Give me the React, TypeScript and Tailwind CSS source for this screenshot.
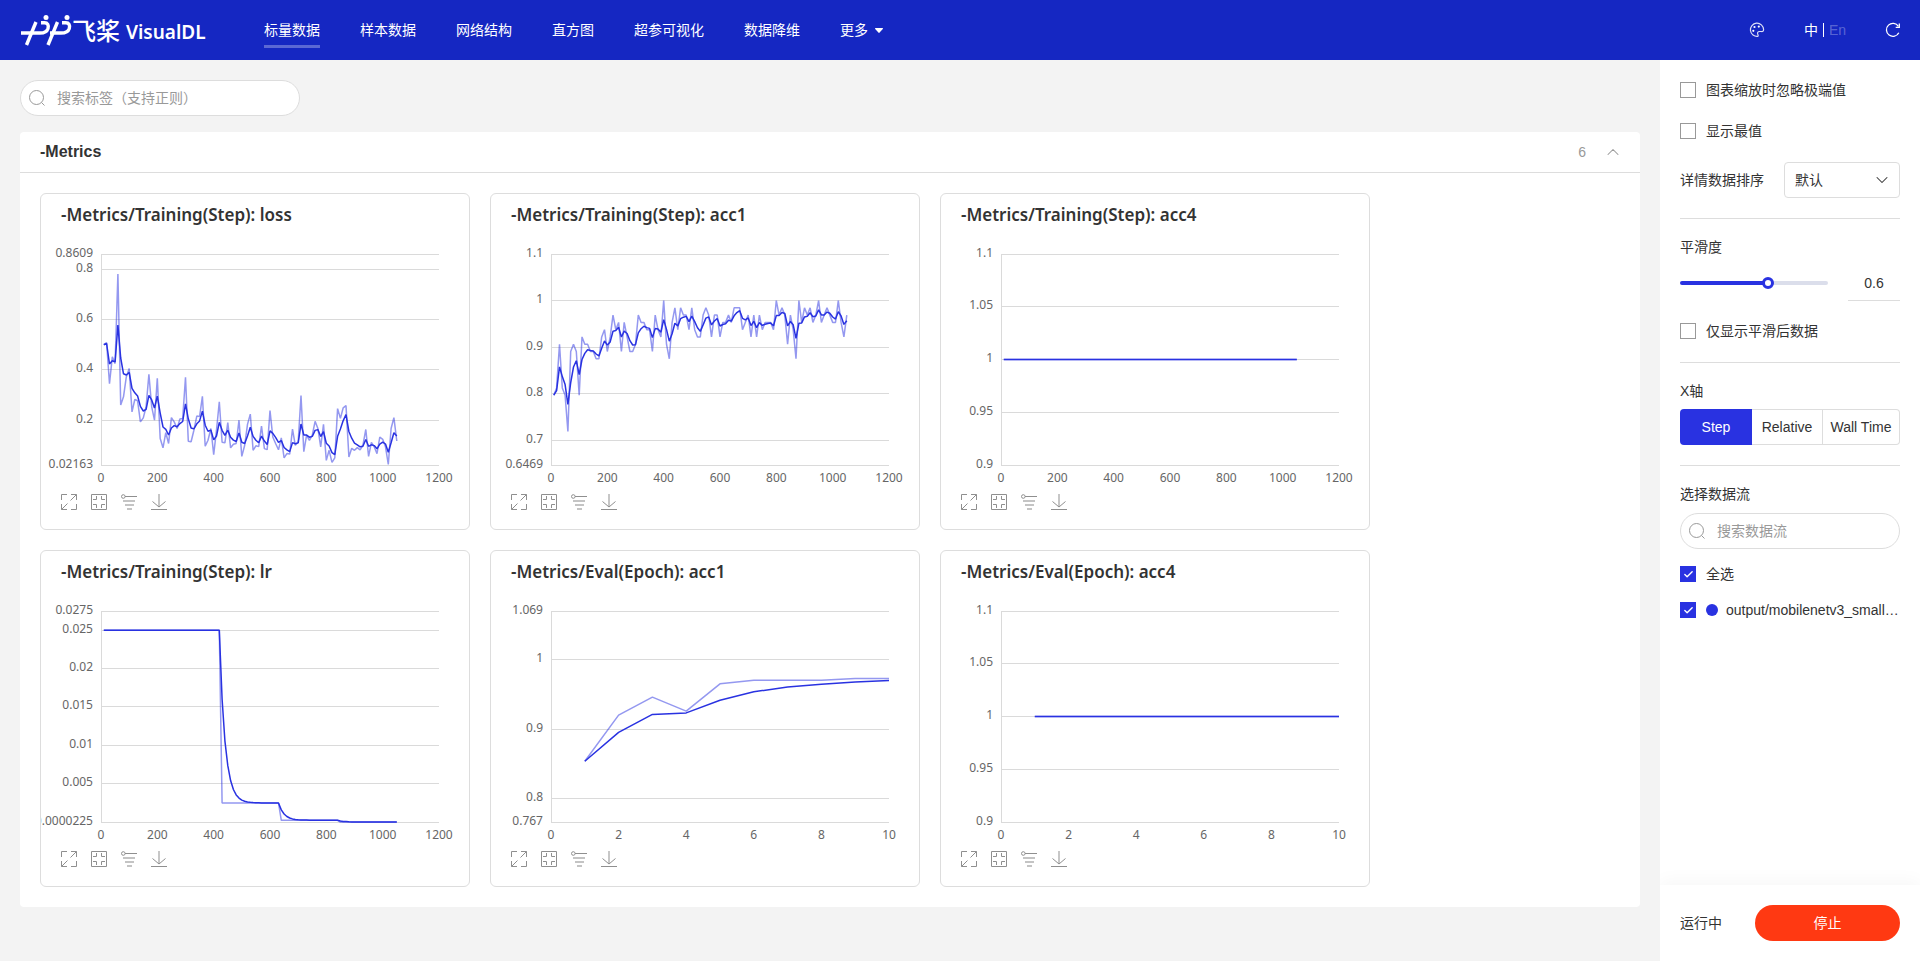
import { useState } from 'react';
import type { ReactNode } from 'react';
import { Check, ChevronDown, ChevronUp } from 'lucide-react';

type Point = [number, number];

interface ChartData {
  title: string;
  points: Point[];
  yTicks: number[];
  xTicks: number[];
}

const NAV = ['标量数据', '样本数据', '网络结构', '直方图', '超参可视化', '数据降维'];

const LOSS = [
  0.5, 0.508, 0.345, 0.452, 0.425, 0.781, 0.26, 0.293, 0.372, 0.405, 0.233, 0.282, 0.277, 0.193, 0.209, 0.253, 0.382,
  0.253, 0.2, 0.366, 0.127, 0.09, 0.15, 0.107, 0.21, 0.193, 0.167, 0.205, 0.207, 0.371, 0.116, 0.114, 0.16, 0.216,
  0.214, 0.295, 0.096, 0.12, 0.167, 0.063, 0.16, 0.273, 0.112, 0.11, 0.19, 0.09, 0.104, 0.107, 0.2, 0.056, 0.1, 0.183,
  0.224, 0.08, 0.098, 0.095, 0.176, 0.087, 0.083, 0.238, 0.133, 0.107, 0.082, 0.13, 0.05, 0.067, 0.065, 0.164, 0.1,
  0.114, 0.298, 0.075, 0.14, 0.12, 0.14, 0.195, 0.167, 0.094, 0.183, 0.04, 0.08, 0.032, 0.05, 0.246, 0.207, 0.249,
  0.258, 0.054, 0.088, 0.08, 0.091, 0.082, 0.1, 0.163, 0.056, 0.111, 0.094, 0.067, 0.133, 0.124, 0.094, 0.0235, 0.167,
  0.21, 0.117,
];

// correct predictions out of a batch of 64
const ACC1 = [
  51, 52, 58, 52, 51, 46, 57, 58, 57, 51, 59, 58, 58, 57, 57, 56, 56, 59, 60, 57, 59, 62, 60, 61, 57, 61, 59, 57, 57,
  58, 62, 61, 61, 60, 60, 57, 62, 60, 59, 64, 58, 56, 61, 63, 60, 63, 62, 62, 60, 63, 60, 59, 59, 62, 63, 62, 59, 62,
  62, 59, 61, 61, 62, 61, 63, 63, 63, 60, 61, 62, 59, 62, 59, 62, 60, 61, 61, 61, 60, 64, 62, 63, 62, 58, 62, 60, 56,
  64, 61, 63, 62, 63, 61, 62, 64, 61, 62, 63, 62, 61, 61, 64, 61, 59, 62,
];

const EVAL_ACC1 = [0.854, 0.92, 0.9457, 0.9257, 0.9648, 0.97, 0.97, 0.97, 0.9724, 0.9724];

const LR = Array.from({ length: 105 }, (_, i) => {
  if (i < 42) return 0.025;
  if (i < 63) return 0.0025;
  if (i < 84) return 0.00025;
  return 0.0000225;
});

const series = (values: number[], step: number): Point[] => values.map((v, i) => [(i + 1) * step, v]);

const STEP_TICKS = [0, 200, 400, 600, 800, 1000, 1200];
const EPOCH_TICKS = [0, 2, 4, 6, 8, 10];

const CHARTS: ChartData[] = [
  {
    title: '-Metrics/Training(Step): loss',
    points: series(LOSS, 10),
    yTicks: [0.02163, 0.2, 0.4, 0.6, 0.8, 0.8609],
    xTicks: STEP_TICKS,
  },
  {
    title: '-Metrics/Training(Step): acc1',
    points: series(ACC1.map((n) => n / 64), 10),
    yTicks: [0.6469, 0.7, 0.8, 0.9, 1, 1.1],
    xTicks: STEP_TICKS,
  },
  {
    title: '-Metrics/Training(Step): acc4',
    points: series(Array(105).fill(1), 10),
    yTicks: [0.9, 0.95, 1, 1.05, 1.1],
    xTicks: STEP_TICKS,
  },
  {
    title: '-Metrics/Training(Step): lr',
    points: series(LR, 10),
    yTicks: [0.0000225, 0.005, 0.01, 0.015, 0.02, 0.025, 0.0275],
    xTicks: STEP_TICKS,
  },
  {
    title: '-Metrics/Eval(Epoch): acc1',
    points: series(EVAL_ACC1, 1),
    yTicks: [0.767, 0.8, 0.9, 1, 1.069],
    xTicks: EPOCH_TICKS,
  },
  {
    title: '-Metrics/Eval(Epoch): acc4',
    points: series(Array(10).fill(1), 1),
    yTicks: [0.9, 0.95, 1, 1.05, 1.1],
    xTicks: EPOCH_TICKS,
  },
];

const formatTick = (v: number) => (v !== 0 && v < 0.001 ? v.toFixed(7) : String(v));

// exponential moving average with debiasing
function smooth(points: Point[], weight: number): Point[] {
  let last = 0;
  return points.map(([x, y], i) => {
    last = last * weight + (1 - weight) * y;
    return [x, last / (1 - Math.pow(weight, i + 1))];
  });
}

function Logo() {
  return (
    <svg width="52" height="32" viewBox="20 14 52 32" fill="none" stroke="#fff" strokeWidth="3.4" className="shrink-0">
      <path d="M21 33h19c4.500 0 7-1.400 8-4.600.9-3.300-.4-5.700-3.500-5.700H41" />
      <path d="M36 22 26.500 45" />
      <path d="M50 33h11c4.500 0 7.300-1.400 8.300-4.600.9-3.300-.4-5.700-3.500-5.700H62" />
      <path d="M57.500 22 48 45" />
      <circle cx="46" cy="17.500" r="2.500" fill="#fff" stroke="none" />
      <circle cx="67" cy="17.500" r="2.500" fill="#fff" stroke="none" />
    </svg>
  );
}

function PaletteIcon() {
  return (
    <svg width="16" height="16" viewBox="0 0 16 16" fill="none" stroke="#fff" strokeOpacity="0.85" strokeWidth="1.200">
      <path d="M9 14.300A6.600 6.600 0 1 1 14.600 7.500c0 1.600-1 2.200-2.300 2H10.400c-1.500 0-2.200 1.300-1.700 2.500.4.900.9 1.900.3 2.300Z" />
      <g fill="#fff" stroke="none">
        <circle cx="5.500" cy="5" r="1.100" />
        <circle cx="9.800" cy="4.600" r="1.100" />
        <circle cx="4.300" cy="8.800" r="1.100" />
      </g>
    </svg>
  );
}

function RefreshIcon() {
  return (
    <svg width="16" height="16" viewBox="0 0 16 16" fill="none" stroke="#fff" strokeWidth="1.300">
      <path d="M13.800 10.700A6.500 6.500 0 1 1 13.400 4.300" />
      <path d="M14.300 1.500v3.800h-3.600" />
    </svg>
  );
}

function SearchIcon() {
  return (
    <svg width="16" height="16" viewBox="0 0 16 16" fill="none" stroke="#999" className="shrink-0">
      <circle cx="7.500" cy="7.500" r="7" />
      <path d="m12.500 12.500 3 3" />
    </svg>
  );
}

function ToolButton({ label, children }: { label: string; children: ReactNode }) {
  return (
    <button type="button" aria-label={label} className="size-4 cursor-pointer text-[#8f8f8f]">
      <svg width="16" height="16" viewBox="0 0 16 16" fill="none" stroke="currentColor">
        {children}
      </svg>
    </button>
  );
}

function Toolbox() {
  return (
    <div className="mt-[9px] flex gap-[14px] px-5">
      <ToolButton label="最大化">
        <path d="M.5 6V.5H6M10 .5h5.500V6M9.500 6.500l6-6M.5 10v5.500H6M.5 15.500l6-6M10 15.500h5.500V10" />
      </ToolButton>
      <ToolButton label="还原缩放">
        <path d="M.5.5h15v15H.5zM5.500 2v3.500H2M10.500 2v3.500H14M2 10.500h3.500V14M14 10.500h-3.500V14" />
      </ToolButton>
      <ToolButton label="切换坐标轴">
        <circle cx="2.300" cy="2.500" r="1.800" />
        <path d="M4 2.500h12" />
        <path d="M2 7h12M4 11h9M6 15h5" strokeWidth="1.500" strokeOpacity="0.700" />
      </ToolButton>
      <ToolButton label="下载图片">
        <path d="M8 0v13M1.500 7.500 8 13l6.500-5.500M0 15.500h16" />
      </ToolButton>
    </div>
  );
}

const LEFT = 60;
const TOP = 14;
const WIDTH = 338;
const HEIGHT = 211;

function LineChart({ points, yTicks, xTicks, weight, smoothedOnly }: Omit<ChartData, 'title'> & { weight: number; smoothedOnly: boolean }) {
  const yMin = yTicks[0];
  const yMax = yTicks[yTicks.length - 1];
  const xMax = xTicks[xTicks.length - 1];
  const px = (x: number) => LEFT + (x / xMax) * WIDTH;
  const py = (y: number) => TOP + (1 - (y - yMin) / (yMax - yMin)) * HEIGHT;
  const toPath = (data: Point[]) => data.map(([x, y]) => `${px(x).toFixed(1)},${py(y).toFixed(1)}`).join(' ');

  return (
    <svg width="428" height="245" className="block font-['Noto_Sans'] text-xs" fill="#666">
      {yTicks.map((tick) => {
        const y = Math.floor(py(tick)) + 0.5;
        return (
          <g key={tick}>
            <line x1={LEFT} x2={LEFT + WIDTH} y1={y} y2={y} stroke="#dadada" />
            <text x={LEFT - 8} y={y + 2.5} textAnchor="end">{formatTick(tick)}</text>
          </g>
        );
      })}
      <line x1={LEFT + 0.5} x2={LEFT + 0.5} y1={TOP} y2={TOP + HEIGHT} stroke="#dadada" />
      {xTicks.map((tick) => (
        <text key={tick} x={px(tick)} y={TOP + HEIGHT + 17} textAnchor="middle">{tick}</text>
      ))}
      <g fill="none" stroke="#2932e1" strokeWidth="1.5" strokeLinejoin="bevel">
        {!smoothedOnly && <polyline points={toPath(points)} strokeOpacity="0.5" />}
        <polyline points={toPath(smooth(points, weight))} />
      </g>
    </svg>
  );
}

function Checkbox({ label, checked, onChange, dot }: { label: string; checked: boolean; onChange: (v: boolean) => void; dot?: boolean }) {
  return (
    <label className="flex h-5 cursor-pointer items-center">
      <span className="relative size-4 shrink-0">
        <input
          type="checkbox"
          checked={checked}
          onChange={(e) => onChange(e.target.checked)}
          className="block size-4 appearance-none border border-[#999] bg-white checked:border-[#2932e1] checked:bg-[#2932e1]"
        />
        {checked && <Check className="pointer-events-none absolute top-[3px] left-[3px] size-[11px] text-white" strokeWidth={3} />}
      </span>
      {dot && <span className="ml-[10px] size-3 shrink-0 rounded-full bg-[#2932e1]" />}
      <span className={dot ? 'ml-2 truncate' : 'ml-[10px]'}>{label}</span>
    </label>
  );
}

function SearchInput({ placeholder }: { placeholder: string }) {
  return (
    <div className="flex h-9 items-center rounded-full border border-[#ddd] bg-white pr-4 pl-2">
      <SearchIcon />
      <input
        type="text"
        aria-label={placeholder}
        placeholder={placeholder}
        className="ml-3 min-w-0 flex-1 bg-transparent outline-none placeholder:text-[#999]"
      />
    </div>
  );
}

function Navbar() {
  return (
    <header className="flex h-[60px] shrink-0 items-center bg-[#1527c2] pr-[19px] pl-5 text-white">
      <a href="#" className="flex w-[224px] items-center">
        <Logo />
        <span className="font-['Noto_Sans_CJK_SC'] text-2xl leading-8 font-medium">飞桨</span>
        <span className="ml-[6px] pt-1 font-['Noto_Sans'] text-[19px] leading-7 font-semibold">VisualDL</span>
      </a>
      <nav className="ml-5 flex gap-10">
        {NAV.map((item, i) => (
          <a
            key={item}
            href="#"
            className={i === 0 ? 'border-b-3 border-white/30 pt-[3px] leading-[30px]' : 'border-b-3 border-transparent pt-[3px] leading-[30px]'}
          >
            {item}
          </a>
        ))}
        <button type="button" className="flex cursor-pointer items-center border-b-3 border-transparent pt-[3px] leading-[30px]">
          更多
          <svg width="8" height="5" viewBox="0 0 8 5" fill="#fff" className="ml-[7px]">
            <path d="M.5 0h7c.5 0 .6.500.300.900L4.600 4.600a.8.8 0 0 1-1.200 0L.2.9C-.1.5 0 0 .5 0Z" />
          </svg>
        </button>
      </nav>
      <div className="ml-auto flex items-center">
        <button type="button" aria-label="主题" className="cursor-pointer">
          <PaletteIcon />
        </button>
        <button type="button" className="ml-[39px] flex cursor-pointer items-center">
          <span>中</span>
          <span className="mx-[5px] h-[14px] w-px bg-white" />
          <span className="text-white/30">En</span>
        </button>
        <button type="button" aria-label="刷新" className="ml-[39px] cursor-pointer">
          <RefreshIcon />
        </button>
      </div>
    </header>
  );
}

export default function App() {
  const [ignoreOutliers, setIgnoreOutliers] = useState(false);
  const [showExtremum, setShowExtremum] = useState(false);
  const [smoothing, setSmoothing] = useState(0.6);
  const [smoothedOnly, setSmoothedOnly] = useState(false);
  const [axis, setAxis] = useState('Step');
  const [selected, setSelected] = useState(true);
  const [running, setRunning] = useState(true);

  const filled = (smoothing / 0.99) * 100;
  const axisClass = (name: string) => (axis === name ? 'bg-[#2932e1] text-white' : 'border-y border-r border-[#ddd] bg-white');

  return (
    <div className="flex min-h-screen flex-col bg-[#f3f3f3] font-['Liberation_Sans','Noto_Sans_CJK_SC',sans-serif] text-sm text-[#333]">
      <Navbar />
      <div className="flex flex-1">
        <main className="min-w-0 flex-1 p-5">
          <div className="w-[280px]">
            <SearchInput placeholder="搜索标签（支持正则）" />
          </div>
          <section className="mt-4 rounded bg-white">
            <div className="flex h-[41px] items-center border-b border-[#ddd] pr-[17px] pl-5">
              <h2 className="text-base font-bold">-Metrics</h2>
              <span className="ml-auto text-[#999]">6</span>
              <button type="button" aria-label="收起" className="ml-[17px] cursor-pointer text-[#999]">
                <ChevronUp className="size-5" strokeWidth={1.25} />
              </button>
            </div>
            <div className="flex flex-wrap gap-5 p-5">
              {CHARTS.map(({ title, ...chart }) => (
                <article key={title} className="h-[337px] w-[430px] overflow-hidden rounded-md border border-[#ddd]">
                  <h3 className="px-5 pt-[9px] pb-[13px] font-['Noto_Sans'] text-[17px] leading-6 font-semibold">{title}</h3>
                  <LineChart {...chart} weight={smoothing} smoothedOnly={smoothedOnly} />
                  <Toolbox />
                </article>
              ))}
            </div>
          </section>
        </main>

        <aside className="flex w-[260px] shrink-0 flex-col overflow-hidden bg-white">
          <div className="flex-1 px-5 pt-5 leading-5">
            <Checkbox label="图表缩放时忽略极端值" checked={ignoreOutliers} onChange={setIgnoreOutliers} />
            <div className="mt-[21px]">
              <Checkbox label="显示最值" checked={showExtremum} onChange={setShowExtremum} />
            </div>
            <div className="mt-[21px] flex items-center justify-between">
              <label htmlFor="sort">详情数据排序</label>
              <div className="relative">
                <select id="sort" className="h-9 w-[116px] appearance-none rounded border border-[#ddd] bg-white px-[10px]">
                  <option>默认</option>
                  <option>升序</option>
                  <option>降序</option>
                </select>
                <ChevronDown className="pointer-events-none absolute top-2 right-2 size-5" strokeWidth={1.25} />
              </div>
            </div>
            <hr className="mt-5 border-[#ddd]" />

            <label htmlFor="smoothing" className="mt-[18px] block">平滑度</label>
            <div className="mt-2 flex items-center justify-between">
              <input
                id="smoothing"
                type="range"
                min={0}
                max={0.99}
                step={0.01}
                value={smoothing}
                onChange={(e) => setSmoothing(Number(e.target.value))}
                className="h-1 w-[148px] appearance-none rounded-full [&::-webkit-slider-thumb]:size-3 [&::-webkit-slider-thumb]:appearance-none [&::-webkit-slider-thumb]:rounded-full [&::-webkit-slider-thumb]:border-3 [&::-webkit-slider-thumb]:border-[#2932e1] [&::-webkit-slider-thumb]:bg-white"
                style={{ background: `linear-gradient(to right, #2932e1 ${filled}%, #dbdeeb ${filled}%)` }}
              />
              <input
                type="text"
                aria-label="平滑度"
                value={smoothing}
                onChange={(e) => setSmoothing(Math.min(0.99, Number(e.target.value) || 0))}
                className="h-9 w-[52px] border-b border-[#ddd] text-center outline-none"
              />
            </div>
            <div className="mt-5">
              <Checkbox label="仅显示平滑后数据" checked={smoothedOnly} onChange={setSmoothedOnly} />
            </div>
            <hr className="mt-[21px] border-[#ddd]" />

            <p className="mt-[18px]">X轴</p>
            <div className="mt-2 flex h-9">
              <button type="button" onClick={() => setAxis('Step')} className={`w-[72px] rounded-l ${axisClass('Step')}`}>Step</button>
              <button type="button" onClick={() => setAxis('Relative')} className={`w-[71px] ${axisClass('Relative')}`}>Relative</button>
              <button type="button" onClick={() => setAxis('Wall Time')} className={`flex-1 rounded-r whitespace-nowrap ${axisClass('Wall Time')}`}>Wall Time</button>
            </div>
            <hr className="mt-5 border-[#ddd]" />

            <p className="mt-[18px] mb-[9px]">选择数据流</p>
            <SearchInput placeholder="搜索数据流" />
            <div className="mt-[15px] flex flex-col gap-4">
              <Checkbox label="全选" checked={selected} onChange={setSelected} />
              <Checkbox label="output/mobilenetv3_small_x1_0" checked={selected} onChange={setSelected} dot />
            </div>
          </div>
          <div className="flex h-[76px] items-center justify-between px-5 shadow-[0_-5px_16px_0_rgba(0,0,0,0.03)]">
            <span>{running ? '运行中' : '已停止'}</span>
            <button
              type="button"
              onClick={() => setRunning(!running)}
              className="h-9 w-[145px] cursor-pointer rounded-full bg-[#ff3912] text-white"
            >
              {running ? '停止' : '运行'}
            </button>
          </div>
        </aside>
      </div>
    </div>
  );
}
